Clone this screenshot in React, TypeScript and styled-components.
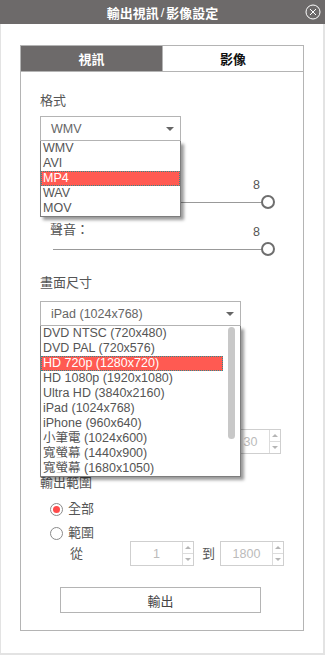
import { createGlobalStyle } from "styled-components";
import styled from "styled-components";

const formats = ["WMV", "AVI", "MP4", "WAV", "MOV"];
const sizes = [
  "DVD NTSC (720x480)",
  "DVD PAL (720x576)",
  "HD 720p (1280x720)",
  "HD 1080p (1920x1080)",
  "Ultra HD (3840x2160)",
  "iPad (1024x768)",
  "iPhone (960x640)",
  "小筆電 (1024x600)",
  "寬螢幕 (1440x900)",
  "寬螢幕 (1680x1050)",
];

export default function App() {
  return (
    <>
      <GlobalStyle />
      <Window>
        <TitleBar>
          輸出視訊<Slash>/</Slash>影像設定
          <CloseButton>
            <svg width="16" height="16" viewBox="0 0 16 16">
              <circle cx="8" cy="8" r="7" fill="none" stroke="#fff" strokeWidth="1" />
              <path d="M5 5 L11 11 M11 5 L5 11" stroke="#fff" strokeWidth="1" />
            </svg>
          </CloseButton>
        </TitleBar>
        <Panel>
          <Tabs>
            <Tab $active>視訊</Tab>
            <Tab>影像</Tab>
          </Tabs>
          <Content>
            <Label>格式</Label>
            <SelectWrap $width={141} $top={7}>
              <SelectBox>WMV</SelectBox>
              <Caret />
              <DropList>
                {formats.map((f) => (
                  <Option key={f} $selected={f === "MP4"}>
                    {f}
                  </Option>
                ))}
              </DropList>
            </SelectWrap>

            {/* quality slider: its label sits under the open format list */}
            <Slider $top={34}>
              <SliderHead>
                <span />
                <span>8</span>
              </SliderHead>
              <Track>
                <Knob />
              </Track>
            </Slider>
            <Slider $top={13}>
              <SliderHead>
                <span>聲音：</span>
                <span>8</span>
              </SliderHead>
              <Track>
                <Knob />
              </Track>
            </Slider>

            <Label $top={19}>畫面尺寸</Label>
            <SelectWrap $width={201} $top={10}>
              <SelectBox>iPad (1024x768)</SelectBox>
              <Caret />
              <DropList $scroll>
                <ScrollArea>
                  {sizes.map((s) => (
                    <Option key={s} $selected={s.startsWith("HD 720p")}>
                      {s}
                    </Option>
                  ))}
                </ScrollArea>
                <Gutter>
                  <Thumb />
                </Gutter>
              </DropList>
            </SelectWrap>

            <FieldRow $top={103}>
              <Spin value="30" width={50} />
            </FieldRow>

            <Label $top={21}>輸出範圍</Label>
            <RadioRow $top={10}>
              <Radio $checked />
              全部
            </RadioRow>
            <RadioRow $top={8}>
              <Radio />
              範圍
            </RadioRow>
            <RangeRow>
              <RangeLabel>從</RangeLabel>
              <Spin value="1" />
              <To>到</To>
              <Spin value="1800" />
            </RangeRow>

            <ExportButton>輸出</ExportButton>
          </Content>
        </Panel>
      </Window>
    </>
  );
}

function Spin({ value, width = 64 }: { value: string; width?: number }) {
  return (
    <SpinBox $width={width}>
      <SpinValue>{value}</SpinValue>
      <SpinButtons>
        <SpinArrow $up />
        <SpinArrow />
      </SpinButtons>
    </SpinBox>
  );
}

const GlobalStyle = createGlobalStyle`
  html, body {
    margin: 0;
    padding: 0;
    background: #fff;
  }
  body {
    font-family: "Liberation Sans", "Noto Sans CJK TC", sans-serif;
    font-size: 13px;
    color: #555;
  }
  * {
    box-sizing: border-box;
  }
`;

const Window = styled.div`
  width: 325px;
  height: 655px;
  border-left: 1px solid #e3e3e3;
  border-right: 2px solid #e3e3e3;
  border-bottom: 2px solid #e3e3e3;
  background: #fff;
`;

const TitleBar = styled.div`
  position: relative;
  height: 24px;
  background: #6d6a6a;
  color: #fff;
  font-weight: bold;
  font-size: 13px;
  display: flex;
  align-items: center;
  justify-content: center;
  margin-left: -1px;
  margin-right: -2px;
`;

const Slash = styled.span`
  margin: 0 2px;
  font-weight: normal;
`;

const CloseButton = styled.div`
  position: absolute;
  right: 4px;
  top: 4px;
  width: 16px;
  height: 16px;
  svg {
    display: block;
  }
`;

const Panel = styled.div`
  margin: 21px 19px 0 19px;
  height: 586px;
  border: 1px solid #b4b4b4;
`;

const Tabs = styled.div`
  display: grid;
  grid-template-columns: 141px 1fr;
  height: 26px;
  border-bottom: 1px solid #b4b4b4;
`;

const Tab = styled.div<{ $active?: boolean }>`
  display: flex;
  align-items: center;
  justify-content: center;
  font-weight: bold;
  background: ${(p) => (p.$active ? "#6d6a6a" : "#fff")};
  color: ${(p) => (p.$active ? "#fff" : "#111")};
  border-left: ${(p) => (p.$active ? "none" : "1px solid #b4b4b4")};
`;

const Content = styled.div`
  padding: 21px 0 0 19px;
  display: flex;
  flex-direction: column;
  align-items: flex-start;
`;

const Label = styled.div<{ $top?: number }>`
  line-height: 16px;
  margin-top: ${(p) => p.$top ?? 0}px;
`;

const SelectWrap = styled.div<{ $width: number; $top: number }>`
  position: relative;
  width: ${(p) => p.$width}px;
  margin-top: ${(p) => p.$top}px;
`;

const SelectBox = styled.div`
  height: 25px;
  border: 1px solid #b4b4b4;
  padding-left: 10px;
  display: flex;
  align-items: center;
  font-size: 12.5px;
  color: #666;
`;

const Caret = styled.div`
  position: absolute;
  right: 7px;
  top: 11px;
  border-left: 4px solid transparent;
  border-right: 4px solid transparent;
  border-top: 4px solid #666;
`;

const DropList = styled.div<{ $scroll?: boolean }>`
  position: absolute;
  left: 0;
  right: 0;
  top: 100%;
  z-index: 2;
  display: ${(p) => (p.$scroll ? "flex" : "block")};
  background: #fff;
  border: 1px solid #7d7d7d;
  border-top: none;
  box-shadow: 3px 3px 3px rgba(0, 0, 0, 0.4);
`;

const ScrollArea = styled.div`
  flex: 1;
  min-width: 0;
`;

const Option = styled.div<{ $selected?: boolean }>`
  height: 15px;
  line-height: 15px;
  padding-left: 2px;
  font-size: 12.5px;
  white-space: nowrap;
  color: ${(p) => (p.$selected ? "#fff" : "#555")};
  background: ${(p) => (p.$selected ? "#ff5a52" : "transparent")};
  outline: ${(p) => (p.$selected ? "1px dotted #2a8f8f" : "none")};
  outline-offset: -1px;
`;

const Gutter = styled.div`
  width: 17px;
  display: flex;
  justify-content: center;
  padding-top: 1px;
`;

const Thumb = styled.div`
  width: 7px;
  height: 112px;
  border-radius: 4px;
  background: #c8c8c8;
`;

const Slider = styled.div<{ $top: number }>`
  width: 225px;
  margin-left: 10px;
  margin-top: ${(p) => p.$top}px;
`;

const SliderHead = styled.div`
  display: flex;
  justify-content: space-between;
  height: 16px;
  line-height: 16px;
  padding-right: 15px;
  span:last-child {
    position: relative;
    top: 2px;
    font-size: 12.5px;
  }
`;

const Track = styled.div`
  position: relative;
  height: 14px;
  margin: 4px 0 0 3px;
  &::before {
    content: "";
    position: absolute;
    left: 0;
    right: 10px;
    top: 7px;
    height: 1px;
    background: #999;
  }
`;

const Knob = styled.div`
  position: absolute;
  right: 0;
  top: 0;
  width: 14px;
  height: 14px;
  border-radius: 50%;
  border: 2px solid #6e6e6e;
  background: #fff;
`;

const FieldRow = styled.div<{ $top: number }>`
  display: flex;
  align-items: center;
  margin-top: ${(p) => p.$top}px;
  padding-left: 191px;
`;

const RadioRow = styled.div<{ $top: number }>`
  display: flex;
  align-items: center;
  gap: 5px;
  line-height: 16px;
  margin-top: ${(p) => p.$top}px;
  padding-left: 10px;
  color: #555;
`;

const Radio = styled.span<{ $checked?: boolean }>`
  width: 13px;
  height: 13px;
  border-radius: 50%;
  border: 1px solid #8a8a8a;
  display: flex;
  align-items: center;
  justify-content: center;
  &::after {
    content: "";
    width: 7px;
    height: 7px;
    border-radius: 50%;
    background: ${(p) => (p.$checked ? "#ff4b4b" : "transparent")};
  }
`;

const RangeRow = styled.div`
  display: flex;
  align-items: center;
  padding-left: 30px;
`;

const RangeLabel = styled.div`
  width: 60px;
  position: relative;
  top: -1px;
`;

const To = styled.div`
  margin: 0 5px 0 8px;
  position: relative;
  top: -1px;
`;

const SpinBox = styled.div<{ $width: number }>`
  width: ${(p) => p.$width}px;
  height: 25px;
  border: 1px solid #cfcfcf;
  display: flex;
  background: #fff;
`;

const SpinValue = styled.div`
  flex: 1;
  display: flex;
  align-items: center;
  justify-content: center;
  font-size: 12.5px;
  color: #bbb;
`;

const SpinButtons = styled.div`
  width: 11px;
  border-left: 1px solid #dcdcdc;
  display: flex;
  flex-direction: column;
`;

const SpinArrow = styled.div<{ $up?: boolean }>`
  flex: 1;
  display: flex;
  align-items: center;
  justify-content: center;
  border-bottom: ${(p) => (p.$up ? "1px solid #dcdcdc" : "none")};
  &::after {
    content: "";
    border-left: 3px solid transparent;
    border-right: 3px solid transparent;
    ${(p) =>
      p.$up ? "border-bottom: 3px solid #b5b5b5;" : "border-top: 3px solid #b5b5b5;"}
  }
`;

const ExportButton = styled.div`
  margin: 21px 0 0 20px;
  width: 201px;
  height: 26px;
  border: 1px solid #b4b4b4;
  display: flex;
  align-items: center;
  justify-content: center;
  color: #444;
`;
